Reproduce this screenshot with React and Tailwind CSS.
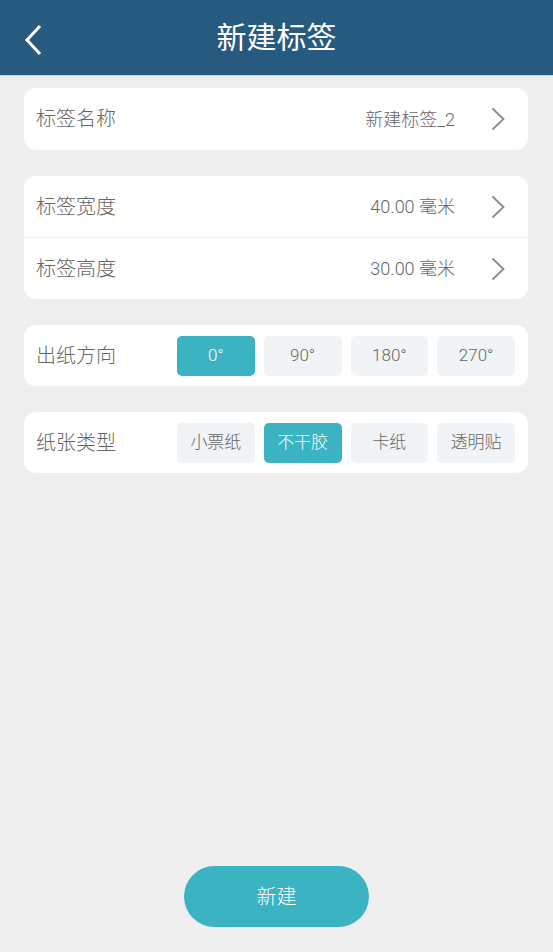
const FONT = '"Roboto", "Noto Sans CJK SC", sans-serif'

function Chevron() {
  return (
    <svg width="14" height="24" viewBox="0 0 14 24" fill="none" className="shrink-0">
      <path d="M1.5 1.5 L12.5 12 L1.5 22.5" stroke="#8a8a8a" strokeWidth="1.8" />
    </svg>
  )
}

function Row({ label, value, border, tall }) {
  return (
    <div
      className={`flex items-center pl-3 pr-[23px] ${tall ? 'h-[62px]' : 'h-[61px]'} ${
        border ? 'border-b border-[#efefef]' : ''
      }`}
    >
      <span className="text-[20px] font-light text-[#666]">{label}</span>
      <span className="ml-auto mr-[36px] text-[18px] font-light text-[#666]">{value}</span>
      <Chevron />
    </div>
  )
}

function Segment({ label, options, active }) {
  return (
    <div className="flex h-[61px] items-center rounded-xl bg-white pl-3 pr-[13px]">
      <span className="w-[141px] text-[20px] font-light text-[#666]">{label}</span>
      <div className="grid flex-1 grid-cols-4 gap-[9px]">
        {options.map((o, i) => (
          <div
            key={o}
            className={`flex h-[40px] items-center justify-center rounded-[5px] text-[17px] font-light ${
              i === active ? 'bg-[#3cb3c3] text-white' : 'bg-[#f1f4f7] text-[#666]'
            }`}
          >
            {o}
          </div>
        ))}
      </div>
    </div>
  )
}

export default function App() {
  return (
    <div className="flex h-[952px] w-[553px] flex-col bg-[#efefef]" style={{ fontFamily: FONT }}>
      <header className="relative flex h-[76px] shrink-0 items-center justify-center border-b border-[#c9d2da] bg-[#265a7f]">
        <svg width="20" height="32" viewBox="0 0 20 32" fill="none" className="absolute left-[24px] top-[24px]">
          <path d="M16 2 L3 16 L16 30" stroke="white" strokeWidth="3" />
        </svg>
        <h1 className="text-[30px] font-normal text-white">新建标签</h1>
      </header>

      <div className="flex flex-col gap-[26px] pl-6 pr-[25px] pt-3">
        <div className="rounded-xl bg-white">
          <Row label="标签名称" value="新建标签_2" tall />
        </div>
        <div className="rounded-xl bg-white">
          <Row label="标签宽度" value="40.00 毫米" border tall />
          <Row label="标签高度" value="30.00 毫米" />
        </div>
        <Segment label="出纸方向" options={['0°', '90°', '180°', '270°']} active={0} />
        <Segment label="纸张类型" options={['小票纸', '不干胶', '卡纸', '透明贴']} active={1} />
      </div>

      <div className="mt-auto flex justify-center pb-[25px]">
        <button className="h-[61px] w-[185px] rounded-full bg-[#3cb3c3] text-[20px] font-light text-white">新建</button>
      </div>
    </div>
  )
}
